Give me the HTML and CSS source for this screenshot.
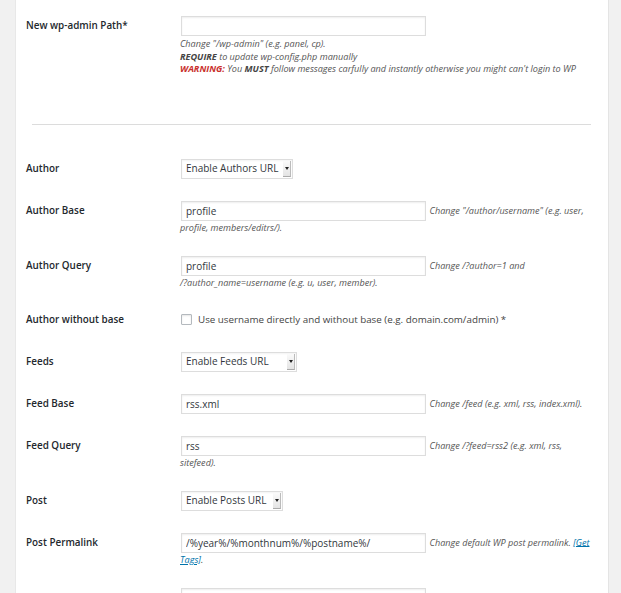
FILE: index.html
```html
<!DOCTYPE html>
<html>
<head>
<meta charset="utf-8">
<link rel="stylesheet" href="styles.css">
</head>
<body>
<div class="wrap">
  <div class="panel">
    <table class="form-table">
      <tr>
        <th>New wp-admin Path*</th>
        <td>
          <input class="text" type="text" value="">
          <p class="description">Change "/wp-admin" (e.g. panel, cp).<br><b>REQUIRE</b> to update wp-config.php manually<br><b class="warn">WARNING:</b> You <b>MUST</b> follow messages carfully and instantly otherwise you might can't login to WP</p>
        </td>
      </tr>
    </table>
    <hr class="divider">
    <table class="form-table">
      <tr>
        <th>Author</th>
        <td><span class="select sel-author"><span class="sel-text">Enable Authors URL</span><span class="sel-btn"><span class="tri"></span></span></span></td>
      </tr>
      <tr>
        <th>Author Base</th>
        <td><input class="text" type="text" value="profile"> <span class="description">Change "/author/username" (e.g. user, profile, members/editrs/).</span></td>
      </tr>
      <tr>
        <th>Author Query</th>
        <td><input class="text" type="text" value="profile"> <span class="description">Change /?author=1 and <span class="nw">/?author_name=username</span> (e.g. u, user, member).</span></td>
      </tr>
      <tr class="row-check">
        <th>Author without base</th>
        <td><label class="check"><span class="box"></span>Use username directly and without base (e.g. domain.com/admin) *</label></td>
      </tr>
      <tr>
        <th>Feeds</th>
        <td><span class="select sel-feeds"><span class="sel-text">Enable Feeds URL</span><span class="sel-btn"><span class="tri"></span></span></span></td>
      </tr>
      <tr>
        <th>Feed Base</th>
        <td><input class="text" type="text" value="rss.xml"> <span class="description">Change /feed (e.g. xml, rss, index.xml).</span></td>
      </tr>
      <tr>
        <th>Feed Query</th>
        <td><input class="text" type="text" value="rss"> <span class="description">Change /?feed=rss2 (e.g. xml, rss, sitefeed).</span></td>
      </tr>
      <tr>
        <th>Post</th>
        <td><span class="select sel-posts"><span class="sel-text">Enable Posts URL</span><span class="sel-btn"><span class="tri"></span></span></span></td>
      </tr>
      <tr>
        <th>Post Permalink</th>
        <td><input class="text" type="text" value="/%year%/%monthnum%/%postname%/"> <span class="description">Change default WP post permalink. <a href="#">[Get Tags]</a>.</span></td>
      </tr>
      <tr>
        <th>Post Query</th>
        <td><input class="text" type="text" value="p"> <span class="description">Change /?p=1 (e.g. p, post, article).</span></td>
      </tr>
    </table>
  </div>
</div>
</body>
</html>
```

FILE: styles.css
```css
html, body {
  margin: 0;
  padding: 0;
  background: #f1f1f1;
  height: 593px;
  overflow: hidden;
}
body {
  font-family: "Open Sans", "Liberation Sans", sans-serif;
  color: #444;
}
.wrap {
  padding: 0 12px 0 15px;
}
.panel {
  background: #fff;
  border-left: 1px solid #e8e8e8;
  border-right: 1px solid #e4e4e4;
  padding-top: 5px;
  min-height: 700px;
}
.form-table {
  width: 100%;
  border-collapse: collapse;
  border-spacing: 0;
}
.form-table th {
  width: 146px;
  text-align: left;
  vertical-align: top;
  padding: 13px 8px 10px 10px;
  font-size: 9.9px;
  line-height: 14px;
  font-weight: 600;
  color: #23282d;
}
.form-table td {
  vertical-align: top;
  padding: 11px 17px 11px 0;
  font-size: 10px;
  line-height: 13px;
}
.row-check th {
  padding-top: 12px;
}
.row-check td {
  padding-bottom: 13px;
}
.text {
  box-sizing: border-box;
  width: 245px;
  height: 20px;
  margin: 0 1px;
  padding: 0 4px;
  border: 1px solid #ddd;
  box-shadow: inset 0 1px 2px rgba(0,0,0,.07);
  font-family: "Open Sans", "Liberation Sans", sans-serif;
  font-size: 10px;
  color: #32373c;
  vertical-align: middle;
  outline: none;
}
.description {
  font-style: italic;
  font-size: 9.1px;
  line-height: 13px;
  color: #555;
}
.description b {
  font-weight: 700;
  color: #444;
}
.description b.warn {
  color: #c9302c;
}
p.description {
  margin: 2px 0 0 0;
  line-height: 12.5px;
}
.description a {
  color: #0073aa;
}
.nw {
  white-space: nowrap;
}
.divider {
  border: 0;
  border-top: 1px solid #dcdcdc;
  margin: 37px 17px 23px 16px;
  height: 0;
}
.select {
  display: inline-flex;
  box-sizing: border-box;
  height: 20px;
  margin-left: 1px;
  border: 1px solid #ddd;
  background: #fff;
  box-shadow: inset 0 1px 2px rgba(0,0,0,.05);
  align-items: center;
  justify-content: space-between;
  font-size: 10px;
  color: #32373c;
  vertical-align: top;
}
.sel-author { width: 112px; }
.sel-feeds { width: 116px; }
.sel-posts { width: 102px; }
.sel-text {
  padding-left: 4px;
  white-space: nowrap;
}
.sel-btn {
  box-sizing: border-box;
  width: 8px;
  height: 16px;
  margin-right: 1px;
  background: linear-gradient(#fafafa, #e4e4e4);
  border-right: 1px solid #bbb;
  border-bottom: 1px solid #aaa;
  display: flex;
  align-items: center;
  justify-content: center;
}
.tri {
  width: 0;
  height: 0;
  border-left: 2px solid transparent;
  border-right: 2px solid transparent;
  border-top: 3px solid #222;
}
.check {
  display: inline-flex;
  align-items: center;
  height: 17px;
  font-size: 9.8px;
  color: #444;
}
.box {
  box-sizing: border-box;
  width: 11px;
  height: 11px;
  margin: 0 6px 0 1px;
  border: 1px solid #b4b9be;
  border-radius: 1px;
  box-shadow: inset 0 1px 2px rgba(0,0,0,.1);
  background: #fff;
}
```
